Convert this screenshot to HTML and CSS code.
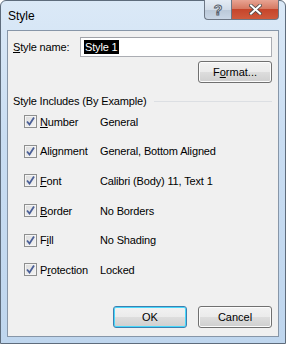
FILE: index.html
```html
<!DOCTYPE html>
<html lang="en">
<head>
  <meta charset="UTF-8">
  <title>Style</title>
  <link rel="stylesheet" href="styles.css">
</head>
<body>

<div class="window">
  <div class="titlebar">
    <span class="title">Style</span>
    <div class="caption-buttons">
      <div class="cap-btn help">?</div>
      <div class="cap-btn close">
        <svg width="13" height="11" viewBox="0 0 13 11">
          <path d="M2 1.5 L11 9.5 M11 1.5 L2 9.5" stroke="#4a4a4a" stroke-width="3.6" stroke-linecap="square"/>
          <path d="M2 1.5 L11 9.5 M11 1.5 L2 9.5" stroke="#fff" stroke-width="2" stroke-linecap="square"/>
        </svg>
      </div>
    </div>
  </div>

  <div class="client">
    <div class="name-row">
      <label class="name-label"><u>S</u>tyle name:</label>
      <div class="textbox"><span class="selected">Style 1</span></div>
    </div>
    <div class="format-row">
      <button class="btn">F<u>o</u>rmat...</button>
    </div>

    <div class="group-title">
      <span>Style Includes (By Example)</span>
      <div class="rule"></div>
    </div>

    <div class="includes">
      <div class="inc-row">
        <span class="check"><svg width="9" height="9" viewBox="0 0 9 9"><path d="M1 4.5 L3.5 7.5 L8 0.5" fill="none" stroke="#4a5f97" stroke-width="1.8"/></svg></span>
        <span class="inc-label"><u>N</u>umber</span>
        <span class="inc-value">General</span>
      </div>
      <div class="inc-row">
        <span class="check"><svg width="9" height="9" viewBox="0 0 9 9"><path d="M1 4.5 L3.5 7.5 L8 0.5" fill="none" stroke="#4a5f97" stroke-width="1.8"/></svg></span>
        <span class="inc-label">Alignment</span>
        <span class="inc-value">General, Bottom Aligned</span>
      </div>
      <div class="inc-row">
        <span class="check"><svg width="9" height="9" viewBox="0 0 9 9"><path d="M1 4.5 L3.5 7.5 L8 0.5" fill="none" stroke="#4a5f97" stroke-width="1.8"/></svg></span>
        <span class="inc-label"><u>F</u>ont</span>
        <span class="inc-value">Calibri (Body) 11, Text 1</span>
      </div>
      <div class="inc-row">
        <span class="check"><svg width="9" height="9" viewBox="0 0 9 9"><path d="M1 4.5 L3.5 7.5 L8 0.5" fill="none" stroke="#4a5f97" stroke-width="1.8"/></svg></span>
        <span class="inc-label"><u>B</u>order</span>
        <span class="inc-value">No Borders</span>
      </div>
      <div class="inc-row">
        <span class="check"><svg width="9" height="9" viewBox="0 0 9 9"><path d="M1 4.5 L3.5 7.5 L8 0.5" fill="none" stroke="#4a5f97" stroke-width="1.8"/></svg></span>
        <span class="inc-label">F<u>i</u>ll</span>
        <span class="inc-value">No Shading</span>
      </div>
      <div class="inc-row">
        <span class="check"><svg width="9" height="9" viewBox="0 0 9 9"><path d="M1 4.5 L3.5 7.5 L8 0.5" fill="none" stroke="#4a5f97" stroke-width="1.8"/></svg></span>
        <span class="inc-label">P<u>r</u>otection</span>
        <span class="inc-value">Locked</span>
      </div>
    </div>

    <div class="footer">
      <button class="btn default">OK</button>
      <button class="btn">Cancel</button>
    </div>
  </div>
</div>

</body>
</html>
```

FILE: styles.css
```css
body {
  margin: 0;
  font-family: "Liberation Sans", Arial, sans-serif;
  font-size: 11px;
  letter-spacing: -0.15px;
  color: #000;
  background: #fff;
}

.window {
  width: 286px;
  height: 344px;
  box-sizing: border-box;
  border: 1px solid #5e6c7c;
  border-radius: 6px 6px 0 0;
  background: linear-gradient(180deg, #dbe9f7 0%, #c9ddf2 40%, #bfd6ee 100%);
  display: flex;
  flex-direction: column;
  padding: 0 6px 6px 6px;
}

.titlebar {
  height: 29px;
  display: flex;
  align-items: flex-start;
}

.title {
  font-size: 12px;
  letter-spacing: 0;
  margin: 8px 0 0 1px;
}

.caption-buttons {
  margin-left: auto;
  display: flex;
  margin-top: -1px;
}

.cap-btn {
  height: 19px;
  border: 1px solid #6d7785;
  border-top: none;
  display: flex;
  align-items: center;
  justify-content: center;
}

.help {
  width: 26px;
  border-right: none;
  border-radius: 0 0 0 4px;
  background: linear-gradient(180deg, #e4ecf5 0%, #d2dce8 50%, #bac8d8 51%, #c9d6e6 100%);
  color: #fff;
  font-size: 14px;
  font-weight: bold;
  -webkit-text-stroke: 1px #55606e;
}

.close {
  width: 46px;
  border-radius: 0 0 4px 0;
  background: linear-gradient(180deg, #e8a493 0%, #d67a63 45%, #c6452b 50%, #cf5a3c 100%);
}

.client {
  flex: 1;
  background: #f0f0f0;
  border: 1px solid #8796a8;
  padding: 6px 6px 8px 5px;
  display: flex;
  flex-direction: column;
}

.name-row {
  display: flex;
  align-items: center;
  height: 20px;
}

.name-label {
  width: 67px;
}

.textbox {
  flex: 1;
  height: 20px;
  box-sizing: border-box;
  border: 1px solid #abadb3;
  border-top-color: #a0a2a8;
  background: #fff;
  display: flex;
  align-items: center;
  padding-left: 3px;
}

.selected {
  background: #000;
  color: #fff;
  padding: 1px 1px;
}

.format-row {
  display: flex;
  justify-content: flex-end;
  margin-top: 4px;
}

.btn {
  width: 74px;
  height: 22px;
  font-family: "Liberation Sans", Arial, sans-serif;
  font-size: 11px;
  color: #000;
  border: 1px solid #707070;
  border-radius: 3px;
  background: linear-gradient(180deg, #f2f2f2 0%, #ebebeb 50%, #dddddd 51%, #cfcfcf 100%);
  box-shadow: inset 0 0 0 1px #fcfcfc;
  padding: 0;
}

.btn.default {
  border-color: #3c7fb1;
  box-shadow: inset 0 0 0 1px #48d8fb;
}

.group-title {
  display: flex;
  align-items: center;
  margin-top: 12px;
}

.rule {
  flex: 1;
  height: 1px;
  background: #dcdfe3;
  margin-left: 7px;
}

.includes {
  display: flex;
  flex-direction: column;
  gap: 16px;
  margin-top: 8px;
  padding-left: 11px;
}

.inc-row {
  display: flex;
  align-items: center;
  height: 13.6px;
}

.check {
  width: 11px;
  height: 11px;
  border: 1px solid #8e8f8f;
  background: linear-gradient(135deg, #dcdcdc 0%, #f4f4f4 100%);
  box-shadow: inset 0 0 0 1px #f4f4f4;
  display: flex;
  align-items: center;
  justify-content: center;
  margin-right: 3px;
}

.inc-label {
  width: 60px;
}

.footer {
  margin-top: auto;
  display: flex;
  justify-content: flex-end;
  gap: 11px;
}
```
